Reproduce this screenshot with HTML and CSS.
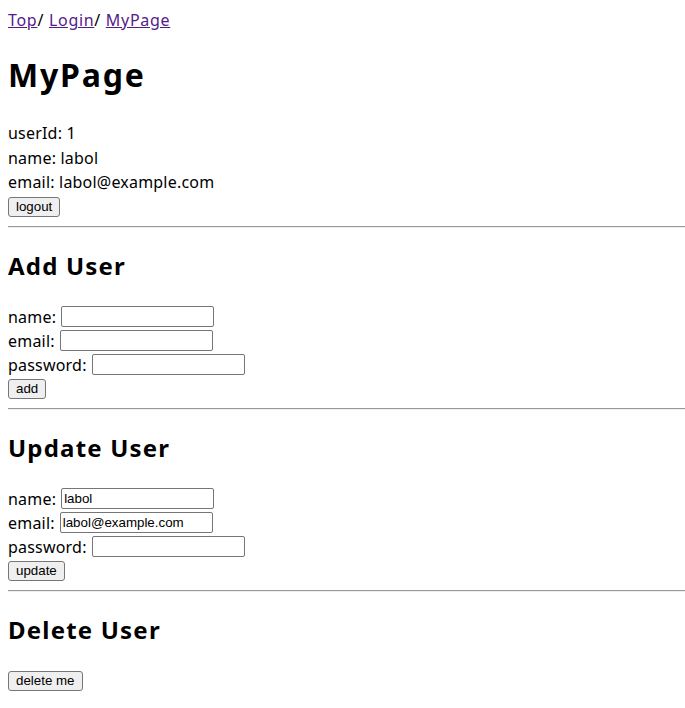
FILE: index.html
```html
<!DOCTYPE html>
<html lang="ja">
<head>
<meta charset="utf-8">
<title>MyPage</title>
<link rel="stylesheet" href="styles.css">
</head>
<body>
<nav class="breadcrumb"><a href="#">Top</a>/ <a href="#">Login</a>/ <a href="#">MyPage</a></nav>
<h1 class="title">MyPage</h1>
<div class="info">
  <div class="info-line">userId: 1</div>
  <div class="info-line">name: labol</div>
  <div class="info-line">email: labol@example.com</div>
</div>
<div class="btn-row"><button class="btn" type="button">logout</button></div>
<hr class="rule">
<section class="section">
  <h2 class="heading">Add User</h2>
  <form class="form">
    <div class="row"><span class="label">name:</span><input class="field" type="text"></div>
    <div class="row"><span class="label">email:</span><input class="field" type="text"></div>
    <div class="row"><span class="label">password:</span><input class="field" type="password"></div>
    <div class="btn-row"><button class="btn" type="button">add</button></div>
  </form>
</section>
<hr class="rule">
<section class="section">
  <h2 class="heading">Update User</h2>
  <form class="form">
    <div class="row"><span class="label">name:</span><input class="field" type="text" value="labol"></div>
    <div class="row"><span class="label">email:</span><input class="field" type="text" value="labol@example.com"></div>
    <div class="row"><span class="label">password:</span><input class="field" type="password"></div>
    <div class="btn-row"><button class="btn" type="button">update</button></div>
  </form>
</section>
<hr class="rule">
<section class="section">
  <h2 class="heading">Delete User</h2>
  <div class="btn-row"><button class="btn" type="button">delete me</button></div>
</section>
</body>
</html>
```
FILE: styles.css
```css
html, body {
  background: #ffffff;
}
body {
  margin: 8px 0 8px 8px;
  font-family: "Noto Sans", "Open Sans", sans-serif;
  font-size: 16px;
  line-height: 24px;
  letter-spacing: 0.2px;
  color: #000000;
}
.breadcrumb {
  display: block;
  height: 24px;
  letter-spacing: 0.7px;
}
.breadcrumb a {
  color: #551a8b;
  text-decoration: underline;
}
.title {
  font-size: 32px;
  font-weight: 700;
  line-height: 40px;
  letter-spacing: 1.8px;
  margin: 23px 0 26px;
}
.info-line {
  line-height: 24.5px;
}
.btn-row {
  display: flex;
  align-items: center;
  height: 24px;
}
.btn {
  font-family: "Liberation Sans", Arial, sans-serif;
  font-size: 13.33px;
  line-height: 16px;
  height: 20px;
  padding: 1px 7px;
  letter-spacing: 0;
  color: #000000;
  background: #efefef;
  border: 1px solid #767676;
  border-radius: 3px;
  box-sizing: border-box;
}
.rule {
  display: block;
  margin: 7px 0 8px 0;
  border: none;
  border-top: 1px solid #9a9a9a;
  border-bottom: 1px solid #eeeeee;
  height: 0;
}
.heading {
  font-size: 24px;
  font-weight: 700;
  line-height: 29px;
  letter-spacing: 1.2px;
  margin: 23px 0 25px;
}
.form {
  margin: 0;
}
.row {
  display: flex;
  align-items: center;
  gap: 5px;
  height: 24px;
}
.field {
  width: 153px;
  height: 21px;
  box-sizing: border-box;
  padding: 1px 2px;
  border: 1px solid #767676;
  border-radius: 2px;
  font-family: "Liberation Sans", Arial, sans-serif;
  font-size: 13.33px;
  letter-spacing: 0;
  color: #000000;
  background: #ffffff;
}
```
